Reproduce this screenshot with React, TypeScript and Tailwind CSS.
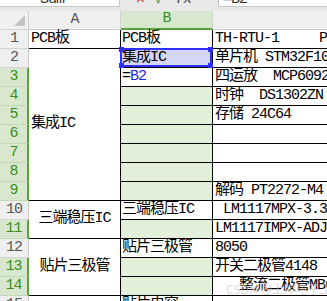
import React from "react";

const GREEN_ROWS = new Set([3, 4, 5, 6, 7, 8, 9, 11, 13, 14]);
const ROWS = Array.from({ length: 15 }, (_, i) => i + 1);

const C_TEXT: Record<number, string> = {
  1: "TH-RTU-1     PCB",
  2: "单片机 STM32F103C8T6",
  3: "四运放  MCP6092",
  4: "时钟  DS1302ZN",
  5: "存储 24C64",
  9: "解码 PT2272-M4",
  10: " LM1117MPX-3.3",
  11: "LM1117IMPX-ADJ",
  12: "8050",
  13: "开关二极管4148",
  14: "   整流二极管MB6S",
};

const B_TEXT: Record<number, string> = {
  1: "PCB板",
  2: "集成IC",
  10: "三端稳压IC",
  12: "贴片三极管",
  15: "贴片电容",
};

function RowHeader({ n }: { n: number }) {
  const green = GREEN_ROWS.has(n);
  return (
    <div
      className={
        green
          ? "h-[19px] shrink-0 flex items-center justify-center bg-[#d8e8cf] text-[#3e8c20] border-b border-b-[#c3d8b8] border-r-2 border-r-[#5ba23c]"
          : "h-[19px] shrink-0 flex items-center justify-center bg-[#efefef] text-[#555555] border-b border-b-[#d4d4d4] border-r border-r-[#c8c8c8]"
      }
    >
      {n}
    </div>
  );
}

function BCell({ n }: { n: number }) {
  const green = GREEN_ROWS.has(n);
  if (n === 2) {
    return (
      <div className="relative h-[19px] shrink-0 flex items-center pl-[1px] bg-[#d6d6f8] border-b border-r border-black whitespace-pre">
        {B_TEXT[2]}
        <div className="absolute -top-[1px] -left-[1px] right-0 bottom-0 border-2 border-[#2f2fff]">
          <div className="absolute -top-[3px] -left-[3px] w-[5px] h-[5px] bg-[#2f2fff]" />
          <div className="absolute -top-[3px] -right-[3px] w-[5px] h-[5px] bg-[#2f2fff]" />
          <div className="absolute -bottom-[3px] -left-[3px] w-[5px] h-[5px] bg-[#2f2fff]" />
          <div className="absolute -bottom-[3px] -right-[3px] w-[5px] h-[5px] bg-[#2f2fff]" />
        </div>
      </div>
    );
  }
  if (n === 3) {
    return (
      <div className="h-[19px] shrink-0 flex items-center pl-[1px] bg-white border-b border-r border-black whitespace-pre">
        <span>=</span>
        <span className="text-[#1f1fe6]">B2</span>
      </div>
    );
  }
  return (
    <div
      className={
        green
          ? "h-[19px] shrink-0 flex items-center pl-[1px] bg-[#e2f0d9] border-b border-r border-black whitespace-pre"
          : "h-[19px] shrink-0 flex items-center pl-[1px] bg-white border-b border-r border-black whitespace-pre"
      }
    >
      {B_TEXT[n] ?? ""}
    </div>
  );
}

export default function App() {
  return (
    <div className="relative w-[327px] h-[301px] overflow-hidden bg-white text-[15px] tracking-[-1px] text-black [font-family:'Liberation_Mono','Noto_Sans_CJK_SC',monospace]">
      {/* formula bar (mostly scrolled off) */}
      <div className="flex h-[11px] bg-[#e8e8e8]">
        <div className="w-[120px] h-[7px] bg-white border-r border-b border-[#c6c6c6] overflow-hidden">
          <div className="-mt-[9px] pl-[40px] leading-[18px] text-[#333]">Sum</div>
        </div>
        <div className="w-[98px] h-[7px] overflow-hidden flex">
          <div className="-mt-[9px] pl-[16px] flex gap-[11px] leading-[18px]">
            <span className="text-[#e04545]">✕</span>
            <span className="text-[#3f9f3f]">✓</span>
            <span className="italic text-[#444]">fx</span>
          </div>
        </div>
        <div className="flex-1 h-[7px] bg-white border-l border-b border-[#c6c6c6] overflow-hidden">
          <div className="-mt-[9px] pl-[4px] leading-[18px] text-[#333]">=B2</div>
        </div>
      </div>

      {/* column headers */}
      <div className="flex h-[19px] bg-[#f0f0f0]">
        <div className="w-[29px] shrink-0 relative border-r border-b border-[#d0d0d0]">
          <div className="absolute right-[3px] bottom-[3px] w-0 h-0 border-l-[11px] border-l-transparent border-b-[11px] border-b-[#c4c4c4]" />
        </div>
        <div className="w-[92px] shrink-0 flex items-center justify-center text-[#555] border-r border-b border-[#d0d0d0]">
          A
        </div>
        <div className="w-[92px] shrink-0 flex items-center justify-center bg-[#d8e8cf] text-[#3e8c20] border-r border-r-[#d0d0d0] border-b-2 border-b-[#5ba23c]">
          B
        </div>
        <div className="flex-1 border-b border-[#d0d0d0]" />
      </div>

      {/* body */}
      <div className="flex">
        <div className="w-[29px] shrink-0 flex flex-col">
          {ROWS.map((n) => (
            <RowHeader key={n} n={n} />
          ))}
        </div>

        <div className="w-[92px] shrink-0 flex flex-col">
          <div className="h-[19px] shrink-0 flex items-center pl-[2px] border-b border-r border-black">PCB板</div>
          <div className="h-[152px] shrink-0 flex items-center pl-[2px] border-b border-r border-black">集成IC</div>
          <div className="h-[38px] shrink-0 flex items-center justify-center border-b border-r border-black">三端稳压IC</div>
          <div className="h-[57px] shrink-0 flex items-center justify-center border-b border-r border-black">贴片三极管</div>
          <div className="h-[19px] shrink-0 border-b border-r border-black" />
        </div>

        <div className="w-[92px] shrink-0 flex flex-col">
          {ROWS.map((n) => (
            <BCell key={n} n={n} />
          ))}
        </div>

        <div className="flex-1 min-w-0 flex flex-col">
          {ROWS.map((n) => (
            <div
              key={n}
              className="h-[19px] shrink-0 flex items-center pl-[2px] border-b border-black whitespace-pre overflow-hidden"
            >
              {C_TEXT[n] ?? ""}
            </div>
          ))}
        </div>
      </div>

      {/* watermark */}
      <div className="absolute left-[226px] top-[283px] text-[12px] tracking-normal leading-[14px] text-[#c4c4c4]/60 whitespace-nowrap [font-family:'Noto_Sans','Noto_Sans_CJK_SC',sans-serif]">
        CSDN @上岸电子工程师
      </div>
    </div>
  );
}
